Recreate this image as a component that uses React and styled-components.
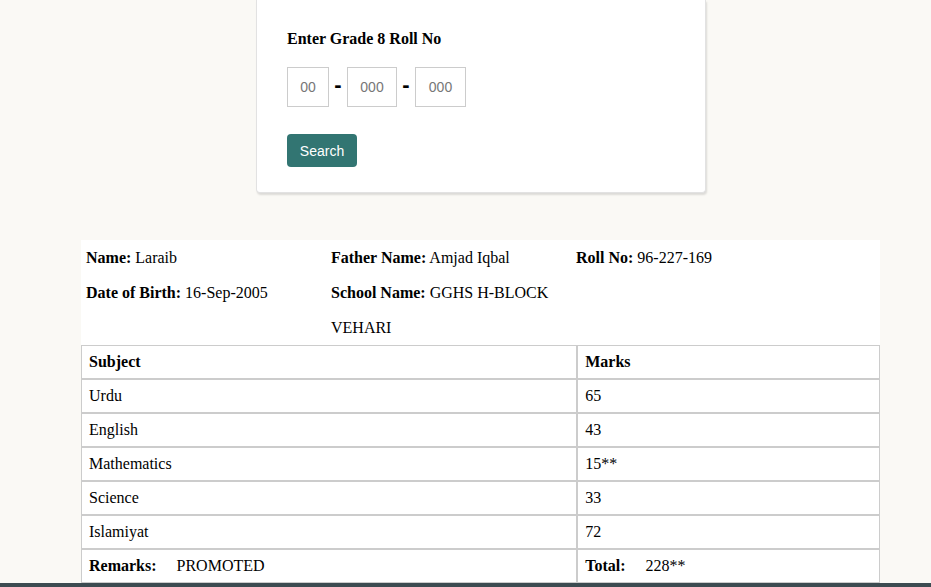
import React from 'react';
import styled, { createGlobalStyle } from 'styled-components';

const GlobalStyle = createGlobalStyle`
  html, body {
    margin: 0;
    padding: 0;
    background: #faf9f5;
    font-family: "Liberation Serif", "Times New Roman", serif;
    color: #000;
  }
`;

const Page = styled.div`
  width: 799px;
  margin-left: 81px;
`;

const Card = styled.div`
  width: 418px;
  margin: 0 0 47px 175px;
  padding: 30px 0 25px 30px;
  background: #fff;
  border: 1px solid #e2e2e2;
  border-top: none;
  border-radius: 0 0 4px 4px;
  box-shadow: 1px 2px 2px rgba(0, 0, 0, 0.12);
`;

const Heading = styled.h3`
  margin: 0 0 19px;
  font-size: 16px;
  line-height: 18px;
  font-weight: bold;
`;

const RollRow = styled.div`
  display: flex;
  align-items: center;
  margin-bottom: 27px;
`;

const RollInput = styled.input`
  box-sizing: border-box;
  width: ${(p) => p.$w}px;
  height: 40px;
  border: 1px solid #cccccc;
  border-radius: 0;
  text-align: center;
  font-family: "Liberation Sans", Arial, sans-serif;
  font-size: 14px;
  outline: none;
  padding: 0;
  &::placeholder {
    color: #777;
  }
`;

const Dash = styled.span`
  width: 18px;
  text-align: center;
  font-family: "Liberation Sans", Arial, sans-serif;
  font-weight: bold;
  font-size: 22px;
  line-height: 20px;
  margin-top: -4px;
`;

const SearchButton = styled.button`
  display: block;
  width: 70px;
  height: 33px;
  border: none;
  border-radius: 4px;
  background: #327572;
  color: #fff;
  font-family: "Liberation Sans", Arial, sans-serif;
  font-size: 14px;
  cursor: pointer;
`;

const Info = styled.div`
  background: #fff;
  display: grid;
  grid-template-columns: repeat(3, 245px);
  padding-left: 5px;
  font-size: 16px;
  line-height: 35px;
`;

const InfoItem = styled.div`
  padding-right: 5px;
`;

const Table = styled.table`
  width: 100%;
  border-spacing: 0;
  background: #fff;
  font-size: 16px;
`;

const Cell = styled.td`
  border: 1px solid #cccccc;
  padding: 7px 7px;
  line-height: 18px;
  font-weight: ${(p) => (p.$head ? 'bold' : 'normal')};
  width: ${(p) => p.$w || 'auto'};
`;

const Label = styled.b`
  margin-right: ${(p) => p.$gap || 0}px;
`;

const Footer = styled.div`
  height: 40px;
  background: #3c4b51;
`;

const marks = [
  ['Urdu', '65'],
  ['English', '43'],
  ['Mathematics', '15**'],
  ['Science', '33'],
  ['Islamiyat', '72'],
];

export default function App() {
  return (
    <>
      <GlobalStyle />
      <Page>
        <Card>
          <Heading>Enter Grade 8 Roll No</Heading>
          <RollRow>
            <RollInput $w={42} placeholder="00" />
            <Dash>-</Dash>
            <RollInput $w={50} placeholder="000" />
            <Dash>-</Dash>
            <RollInput $w={51} placeholder="000" />
          </RollRow>
          <SearchButton>Search</SearchButton>
        </Card>

        <Info>
          <InfoItem><b>Name:</b> Laraib</InfoItem>
          <InfoItem><b>Father Name:</b> Amjad Iqbal</InfoItem>
          <InfoItem><b>Roll No:</b> 96-227-169</InfoItem>
          <InfoItem><b>Date of Birth:</b> 16-Sep-2005</InfoItem>
          <InfoItem><b>School Name:</b> GGHS H-BLOCK VEHARI</InfoItem>
        </Info>

        <Table>
          <tbody>
            <tr>
              <Cell $head $w="62.1%">Subject</Cell>
              <Cell $head>Marks</Cell>
            </tr>
            {marks.map(([s, m]) => (
              <tr key={s}>
                <Cell>{s}</Cell>
                <Cell>{m}</Cell>
              </tr>
            ))}
            <tr>
              <Cell><Label $gap={20}>Remarks:</Label>PROMOTED</Cell>
              <Cell><Label $gap={20}>Total:</Label>228**</Cell>
            </tr>
          </tbody>
        </Table>
      </Page>
      <Footer />
    </>
  );
}
